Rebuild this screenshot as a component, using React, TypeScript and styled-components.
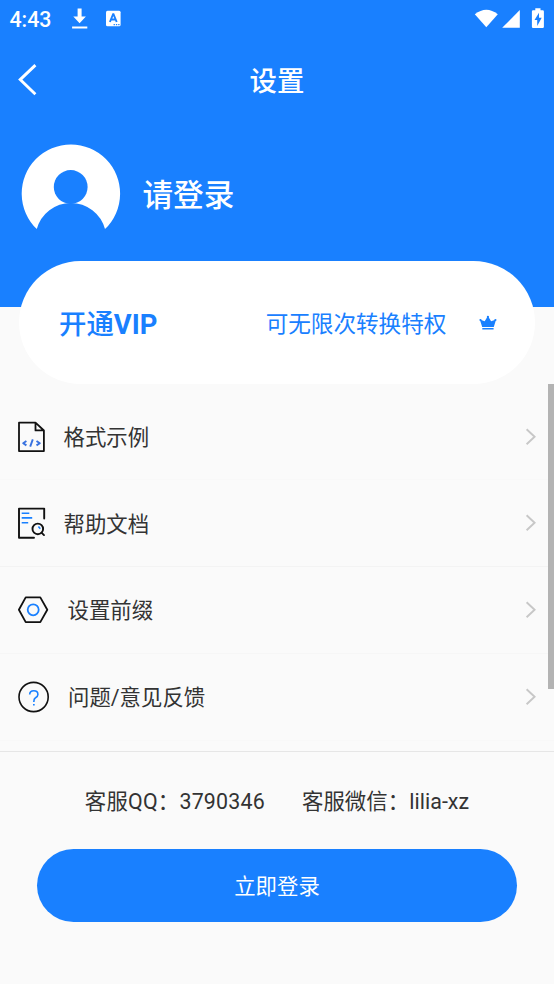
import React from 'react';
import styled, { createGlobalStyle } from 'styled-components';

const BLUE = '#1980ff';

const GlobalStyle = createGlobalStyle`
  * { box-sizing: border-box; }
  html, body { margin: 0; padding: 0; background: #fafafa; }
  body { overflow: hidden; font-family: Roboto, "Noto Sans CJK SC", sans-serif; color: #333; }
  svg { display: block; flex: none; }
`;

const Screen = styled.div`
  position: relative;
  width: 554px;
  height: 984px;
  overflow: hidden;
  background: #fafafa;
`;

const Header = styled.header`
  height: 307.4px;
  background: ${BLUE};
  color: #fff;
`;

const StatusBar = styled.div`
  display: flex;
  align-items: center;
  height: 38px;
  padding: 0 8px 0 9.5px;
`;

const Clock = styled.span`
  width: 61.5px;
  padding-top: 2px;
  font-size: 21.3px;
  font-weight: 500;
  line-height: 36px;
`;

const Notifications = styled.div`
  display: flex;
  flex: 1;
  align-items: center;
  gap: 16px;
`;

const TitleBar = styled.div`
  display: grid;
  grid-template-columns: 37px 1fr 37px;
  align-items: center;
  height: 84px;
`;

const Title = styled.h1`
  margin: 0;
  padding-top: 5px;
  text-align: center;
  font-size: 27.4px;
  font-weight: 500;
  line-height: 79px;
`;

const Profile = styled.div`
  display: flex;
  align-items: center;
  gap: 21.5px;
  padding: 21px 0 0 20px;
`;

const LoginName = styled.div`
  padding-top: 5px;
  font-size: 30.6px;
  font-weight: 500;
  line-height: 95px;
`;

const VipCard = styled.section`
  position: relative;
  display: flex;
  align-items: center;
  height: 122.8px;
  margin: -46px 18.6px 0 18.6px;
  padding: 1px 38px 0 40.4px;
  border-radius: 61.4px;
  background: #fff;
  color: ${BLUE};
`;

const VipTitle = styled.div`
  padding-top: 3px;
  font-size: 27.4px;
  font-weight: 500;
  line-height: 40px;
`;

const Latin = styled.span`
  font-weight: 700;
`;

const VipNote = styled.div`
  margin: 0 33px 0 auto;
  padding-top: 3px;
  font-size: 22.6px;
  line-height: 34px;
`;

const Menu = styled.nav`
  padding-top: 9.6px;
`;

const MenuRow = styled.div<{ $line: string }>`
  display: flex;
  align-items: center;
  height: 86.7px;
  padding: 0 17px;
  border-bottom: 1px solid ${(p) => p.$line};
`;

const MenuLabel = styled.span<{ $gap: number }>`
  flex: 1;
  margin-left: ${(p) => p.$gap}px;
  padding-top: 2.4px;
  font-size: 21.4px;
  line-height: 32px;
`;

const Footer = styled.footer`
  height: 233px;
  margin-top: 10.3px;
  padding: 34px 37px 0;
  border-top: 1px solid #e6e6e6;
`;

const Contacts = styled.div`
  display: flex;
  justify-content: center;
  gap: 37px;
  font-size: 21.4px;
  line-height: 32px;
`;

const Account = styled.span<{ $tracking?: number }>`
  letter-spacing: ${(p) => p.$tracking ?? 0}px;
`;

const LoginButton = styled.button`
  display: block;
  width: 480px;
  height: 73.4px;
  margin-top: 31px;
  padding: 0 0 2px;
  border: 0;
  border-radius: 37px;
  background: ${BLUE};
  color: #fff;
  font: inherit;
  font-size: 21.4px;
`;

const ScrollThumb = styled.div`
  position: absolute;
  top: 384.4px;
  right: 0;
  width: 6px;
  height: 304.4px;
  background: #b3b3b3;
`;

const DownloadIcon = () => (
  <svg width="18" height="24" viewBox="0 0 18 24" fill="#fff">
    <path d="M6.6 1.400h4v8h4.300L8.600 16.200 2.300 9.400h4.300z" />
    <path d="M1.100 19.500h15.200v2H1.100z" />
  </svg>
);

const KeyboardIcon = () => (
  <svg width="16" height="18" viewBox="0 0 16 18">
    <rect x="1" y=".7" width="14.600" height="15.600" rx="1.500" fill="#fff" />
    <path d="M4.900 12 8.100 4.200h.4l3.200 7.800M5.900 9.500h4.800" fill="none" stroke={BLUE} strokeWidth="1.900" />
    <path d="M8.600 13.900h1.300v1.300H8.600zM10.900 13.900h1.300v1.300h-1.300zM13.200 13.900h1.300v1.300h-1.300z" fill={BLUE} />
  </svg>
);

const SignalIcons = () => (
  <svg width="72" height="24" viewBox="0 0 72 24" fill="#fff">
    <path d="M.8 7.300Q12.300-1.700 23.800 7.300L12.300 20.200z" />
    <path d="M45.800 3v17.800H28.200z" />
    <path fillRule="evenodd" d="M61.300 1.300h5.200v2h2.200q1.200 0 1.200 1.200v15.200q0 1.200-1.200 1.200h-9.600q-1.200 0-1.200-1.200V4.500q0-1.200 1.200-1.200h2.200zM65 5.800l-4.500 7.100h2.700v6l4.500-8.100H65z" />
  </svg>
);

const BackIcon = () => (
  <svg width="37" height="34" viewBox="0 0 37 34" fill="none" stroke="#fff" strokeWidth="2.900">
    <path d="M35.400 2.100 20.200 16.600l15.200 14.700" />
  </svg>
);

const Avatar = () => (
  <svg width="101" height="100" viewBox="0 0 101 100">
    <path fill="#fff" d="M16.800 86.100A49.200 49.200 0 1 1 85 86.100A35.300 35.300 0 0 0 16.800 86.100z" />
    <circle cx="50.700" cy="44" r="16.900" fill={BLUE} />
  </svg>
);

const CrownIcon = () => (
  <svg width="18" height="16" viewBox="0 0 18 16" fill={BLUE}>
    <path d="M3.200 12 .8 4.500 5.700 6.300 8.900 1 12.100 6.300l5-1.800-2.300 7.500zM3.300 13.100h11.300v1.500H3.300z" />
    <circle cx="1.500" cy="5" r="1.100" />
    <circle cx="8.900" cy="1.900" r="1.100" />
    <circle cx="16.400" cy="5" r="1.100" />
  </svg>
);

const FormatIcon = () => (
  <svg width="32" height="34" viewBox="0 0 32 34" fill="none" stroke="#111" strokeWidth="1.800" strokeLinejoin="round">
    <path d="M2 2.700h16.500l8.400 7.800v20.600H2zM18.500 2.700v7.700h8.400" />
    <g stroke="#3972e0" strokeWidth="1.900">
      <path d="M9.400 21 6.200 23.200l3.200 2.200M19.500 21l3.300 2.200-3.300 2.200M15.800 19.400l-2.600 7.200" />
    </g>
  </svg>
);

const DocsIcon = () => (
  <svg width="32" height="34" viewBox="0 0 32 34" fill="none" stroke="#111" strokeWidth="1.900" strokeLinecap="round">
    <path d="M27.200 12.500V2.600H2v29.200h15" strokeLinejoin="round" />
    <circle cx="20.800" cy="22.900" r="5.300" />
    <path d="m24.700 26.800 2.300 2.300" />
    <g stroke={BLUE} strokeWidth="1.600" strokeLinecap="butt">
      <path d="M4.700 7.200h7.600M4.700 11.900h10.500M4.700 16.700h6.500M21.400 20.500l1.900 2.300" />
    </g>
  </svg>
);

const PrefixIcon = () => (
  <svg width="32" height="32" viewBox="0 0 32 32" fill="none" strokeWidth="1.800">
    <path d="M8.700 3.400h14.600L30.300 15.800l-7 12.300H8.700L1.900 15.800z" stroke="#111" strokeLinejoin="round" />
    <circle cx="16.200" cy="15.800" r="5.500" stroke={BLUE} />
  </svg>
);

const FeedbackIcon = () => (
  <svg width="34" height="34" viewBox="0 0 34 34" fill="none" strokeWidth="1.600">
    <circle cx="16.600" cy="17" r="14.600" stroke="#111" />
    <path d="M12.700 14.600q0-3.800 4.100-3.800t4.100 3.600q0 1.900-2.400 3.400-1.700 1-1.700 4.300" stroke={BLUE} />
    <path d="M16 23.900h1.700v1.500H16z" fill={BLUE} />
  </svg>
);

const ChevronIcon = () => (
  <svg width="13" height="18" viewBox="0 0 13 18" fill="none" stroke="#c7c7c7" strokeWidth="1.900">
    <path d="m2.600 1.300 8 7.500-8 7.500" />
  </svg>
);

const menuItems = [
  { label: '格式示例', Icon: FormatIcon, gap: 14.5, line: '#f8f8f8' },
  { label: '帮助文档', Icon: DocsIcon, gap: 14.5, line: '#f3f3f3' },
  { label: '设置前缀', Icon: PrefixIcon, gap: 18.5, line: '#f6f6f6' },
  { label: '问题/意见反馈', Icon: FeedbackIcon, gap: 17, line: '#f8f8f8' },
];

export default function App() {
  return (
    <>
      <GlobalStyle />
      <Screen>
        <Header>
          <StatusBar>
            <Clock>4:43</Clock>
            <Notifications>
              <DownloadIcon />
              <KeyboardIcon />
            </Notifications>
            <SignalIcons />
          </StatusBar>
          <TitleBar>
            <BackIcon />
            <Title>设置</Title>
          </TitleBar>
          <Profile>
            <Avatar />
            <LoginName>请登录</LoginName>
          </Profile>
        </Header>
        <VipCard>
          <VipTitle>
            开通<Latin>VIP</Latin>
          </VipTitle>
          <VipNote>可无限次转换特权</VipNote>
          <CrownIcon />
        </VipCard>
        <Menu>
          {menuItems.map(({ label, Icon, gap, line }) => (
            <MenuRow key={label} $line={line}>
              <Icon />
              <MenuLabel $gap={gap}>{label}</MenuLabel>
              <ChevronIcon />
            </MenuRow>
          ))}
        </Menu>
        <Footer>
          <Contacts>
            <Account $tracking={0.2}>客服QQ：3790346</Account>
            <Account $tracking={0.05}>客服微信：lilia-xz</Account>
          </Contacts>
          <LoginButton>立即登录</LoginButton>
        </Footer>
        <ScrollThumb />
      </Screen>
    </>
  );
}
